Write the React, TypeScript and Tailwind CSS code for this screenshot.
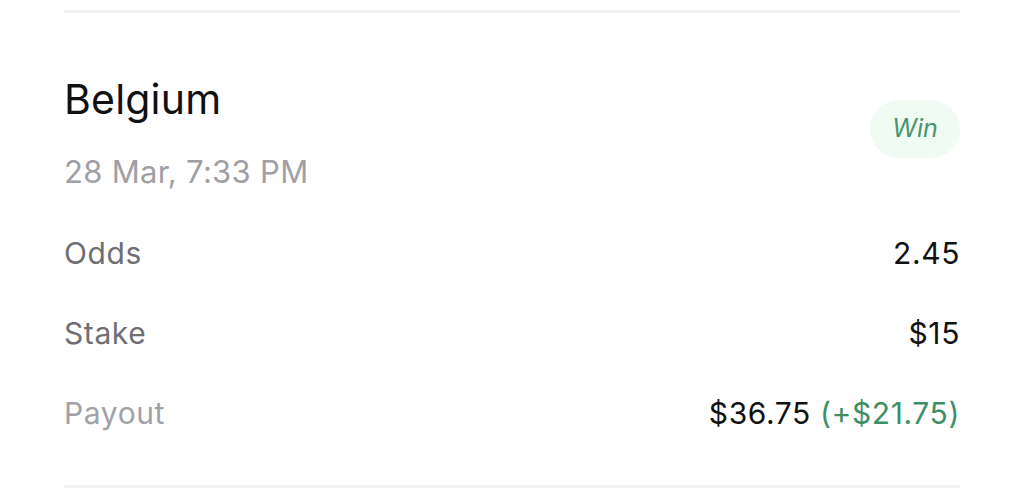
export default function App() {
  return (
    <div className="h-[494px] w-[1024px] overflow-hidden bg-white px-16 pt-[10px] font-['Inter',sans-serif]">
      <div className="h-[3px] w-full bg-[#f2f2f3]" />

      <div className="mt-[62px] flex items-start justify-between">
        <div>
          <h2 className="text-[41px] leading-[48px] tracking-[0.005em] text-[#111111]">Belgium</h2>
          <p className="mt-[31px] text-[31px] leading-[36px] tracking-[0.01em] text-[#a0a0a4]">28 Mar, 7:33 PM</p>
        </div>
        <span className="mt-[25px] flex h-[58px] w-[90px] items-center justify-center rounded-full bg-[#f0fbf4] text-[25px] italic text-[#4a9470]">
          Win
        </span>
      </div>

      <div className="mt-[46px] flex flex-col gap-[46px] text-[30px] leading-[34px] tracking-[0.02em]">
        <div className="flex items-center justify-between">
          <span className="text-[#6e6e73]">Odds</span>
          <span className="text-[#111111]">2.45</span>
        </div>
        <div className="flex items-center justify-between">
          <span className="text-[#6e6e73]">Stake</span>
          <span className="text-[#111111]">$15</span>
        </div>
        <div className="flex items-center justify-between">
          <span className="text-[#a1a1a6]">Payout</span>
          <span className="text-[#111111]">
            $36.75 <span className="text-[#3f8f66]">(+$21.75)</span>
          </span>
        </div>
      </div>

      <div className="mt-[55px] h-[3px] w-full bg-[#f2f2f3]" />
    </div>
  );
}
